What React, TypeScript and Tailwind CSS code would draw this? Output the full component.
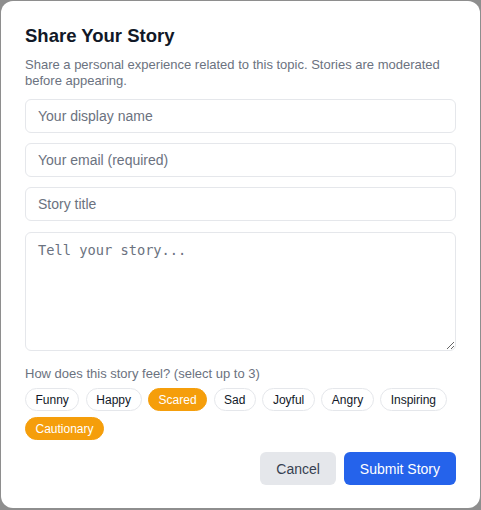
import { useState } from 'react'

const MOODS = ['Funny', 'Happy', 'Scared', 'Sad', 'Joyful', 'Angry', 'Inspiring', 'Cautionary']

export default function App() {
  const [selected, setSelected] = useState<string[]>(['Scared', 'Cautionary'])

  const toggle = (mood: string) => {
    setSelected((prev) =>
      prev.includes(mood) ? prev.filter((m) => m !== mood) : prev.length < 3 ? [...prev, mood] : prev
    )
  }

  return (
    <div className="w-[481px] h-[510px] bg-[#8e8e8e] pt-px pl-px font-['Liberation_Sans',Arial,sans-serif]">
      <div className="w-[479px] h-[507px] bg-white rounded-xl px-6 pt-5">
        <h2 className="mt-px text-[18.5px] leading-7 font-bold text-[#111827]">Share Your Story</h2>
        <p className="mt-[7px] text-[13px] leading-4 text-[#6b7280]">
          Share a personal experience related to this topic. Stories are moderated before appearing.
        </p>

        {/* Form fields */}
        <div className="mt-2.5 flex flex-col gap-2.5">
          <Field placeholder="Your display name" />
          <Field placeholder="Your email (required)" />
          <Field placeholder="Story title" />
          <textarea
            placeholder="Tell your story..."
            className="mt-px h-[119px] w-full rounded-md border border-[#e5e7eb] px-3 py-2 font-['DejaVu_Sans_Mono',monospace] text-[13.7px] leading-[18px] placeholder:text-[#6b7280] outline-none"
          />
        </div>

        {/* Mood chips */}
        <p className="mt-[15px] text-[13px] leading-4 text-[#6b7280]">How does this story feel? (select up to 3)</p>
        <div className="mt-1.5 flex flex-wrap gap-x-[6.5px] gap-y-1.5">
          {MOODS.map((mood) => {
            const active = selected.includes(mood)
            return (
              <button
                key={mood}
                onClick={() => toggle(mood)}
                className={
                  active
                    ? 'h-[23px] px-[9.5px] rounded-full border border-[#f59e0b] bg-[#f59e0b] text-xs text-white'
                    : 'h-[23px] px-[9.5px] rounded-full border border-[#e5e7eb] bg-white text-xs text-[#111827]'
                }
              >
                {mood}
              </button>
            )
          })}
        </div>

        {/* Actions */}
        <div className="mt-3 flex justify-end gap-2">
          <button className="h-[33px] px-4 rounded-md bg-[#e5e7eb] text-sm text-[#374151]">Cancel</button>
          <button className="h-[33px] px-4 rounded-md bg-[#2563eb] text-sm text-white">Submit Story</button>
        </div>
      </div>
    </div>
  )
}

function Field({ placeholder }: { placeholder: string }) {
  return (
    <input
      placeholder={placeholder}
      className="h-[34px] w-full rounded-md border border-[#e5e7eb] px-3 text-sm placeholder:text-[#6b7280] outline-none"
    />
  )
}
